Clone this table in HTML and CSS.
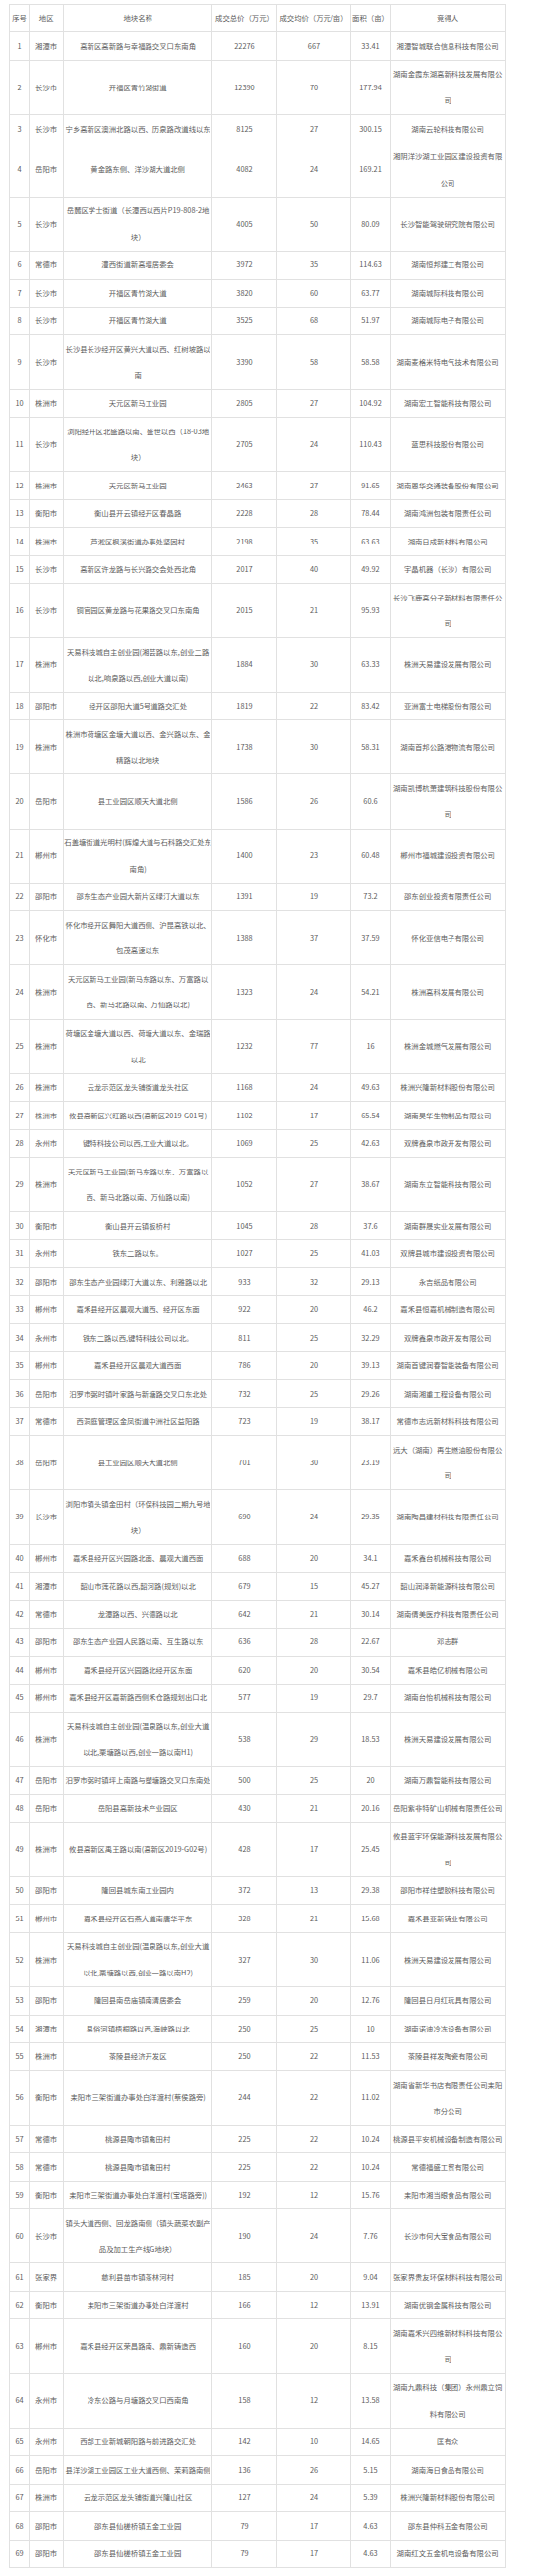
FILE: index.html
```html
<!DOCTYPE html>
<html lang="zh-CN">
<head>
<meta charset="utf-8">
<title>土地成交</title>
<link rel="stylesheet" href="styles.css">
</head>
<body>
<table class="land">
<colgroup>
<col class="c-no"><col class="c-area"><col class="c-name"><col class="c-total"><col class="c-avg"><col class="c-size"><col class="c-buyer">
</colgroup>
<thead>
<tr><th>序号</th><th>地区</th><th>地块名称</th><th>成交总价（万元）</th><th>成交均价（万元/亩）</th><th>面积（亩）</th><th>竞得人</th></tr>
</thead>
<tbody>
<tr><td>1</td><td>湘潭市</td><td>高新区高新路与幸福路交叉口东南角</td><td>22276</td><td>667</td><td>33.41</td><td>湘潭智城联合信息科技有限公司</td></tr>
<tr><td>2</td><td>长沙市</td><td>开福区青竹湖街道</td><td>12390</td><td>70</td><td>177.94</td><td>湖南金霞东湖高新科技发展有限公司</td></tr>
<tr><td>3</td><td>长沙市</td><td>宁乡高新区澳洲北路以西、历泉路改道线以东</td><td>8125</td><td>27</td><td>300.15</td><td>湖南云轮科技有限公司</td></tr>
<tr><td>4</td><td>岳阳市</td><td>黄金路东侧、洋沙湖大道北侧</td><td>4082</td><td>24</td><td>169.21</td><td>湘阴洋沙湖工业园区建设投资有限公司</td></tr>
<tr><td>5</td><td>长沙市</td><td>岳麓区学士街道（长潭西以西片P19-808-2地块）</td><td>4005</td><td>50</td><td>80.09</td><td>长沙智能驾驶研究院有限公司</td></tr>
<tr><td>6</td><td>常德市</td><td>澧西街道新高堰居委会</td><td>3972</td><td>35</td><td>114.63</td><td>湖南恒邦建工有限公司</td></tr>
<tr><td>7</td><td>长沙市</td><td>开福区青竹湖大道</td><td>3820</td><td>60</td><td>63.77</td><td>湖南城际科技有限公司</td></tr>
<tr><td>8</td><td>长沙市</td><td>开福区青竹湖大道</td><td>3525</td><td>68</td><td>51.97</td><td>湖南城际电子有限公司</td></tr>
<tr><td>9</td><td>长沙市</td><td>长沙县长沙经开区黄兴大道以西、红树坡路以南</td><td>3390</td><td>58</td><td>58.58</td><td>湖南麦格米特电气技术有限公司</td></tr>
<tr><td>10</td><td>株洲市</td><td>天元区新马工业园</td><td>2805</td><td>27</td><td>104.92</td><td>湖南宏工智能科技有限公司</td></tr>
<tr><td>11</td><td>长沙市</td><td>浏阳经开区北盛路以南、盛世以西（18-03地块）</td><td>2705</td><td>24</td><td>110.43</td><td>蓝思科技股份有限公司</td></tr>
<tr><td>12</td><td>株洲市</td><td>天元区新马工业园</td><td>2463</td><td>27</td><td>91.65</td><td>湖南恩华交通装备股份有限公司</td></tr>
<tr><td>13</td><td>衡阳市</td><td>衡山县开云镇经开区春晶路</td><td>2228</td><td>28</td><td>78.44</td><td>湖南鸿洲包装有限责任公司</td></tr>
<tr><td>14</td><td>株洲市</td><td>芦淞区枫溪街道办事处坚固村</td><td>2198</td><td>35</td><td>63.63</td><td>湖南日成新材料有限公司</td></tr>
<tr><td>15</td><td>长沙市</td><td>高新区许龙路与长兴路交会处西北角</td><td>2017</td><td>40</td><td>49.92</td><td>宇晶机器（长沙）有限公司</td></tr>
<tr><td>16</td><td>长沙市</td><td>铜官园区黄龙路与花果路交叉口东南角</td><td>2015</td><td>21</td><td>95.93</td><td>长沙飞鹿高分子新材料有限责任公司</td></tr>
<tr><td>17</td><td>株洲市</td><td>天易科技城自主创业园(湘芸路以东,创业二路以北,响泉路以西,创业大道以南)</td><td>1884</td><td>30</td><td>63.33</td><td>株洲天易建设发展有限公司</td></tr>
<tr><td>18</td><td>邵阳市</td><td>经开区邵阳大道5号道路交汇处</td><td>1819</td><td>22</td><td>83.42</td><td>亚洲富士电梯股份有限公司</td></tr>
<tr><td>19</td><td>株洲市</td><td>株洲市荷塘区金塘大道以西、金兴路以东、金精路以北地块</td><td>1738</td><td>30</td><td>58.31</td><td>湖南首邦公路港物流有限公司</td></tr>
<tr><td>20</td><td>岳阳市</td><td>县工业园区顺天大道北侧</td><td>1586</td><td>26</td><td>60.6</td><td>湖南凯博杭萧建筑科技股份有限公司</td></tr>
<tr><td>21</td><td>郴州市</td><td>石盖塘街道光明村(辉煌大道与石科路交汇处东南角)</td><td>1400</td><td>23</td><td>60.48</td><td>郴州市福城建设投资有限公司</td></tr>
<tr><td>22</td><td>邵阳市</td><td>邵东生态产业园大新片区绿汀大道以东</td><td>1391</td><td>19</td><td>73.2</td><td>邵东创业投资有限责任公司</td></tr>
<tr><td>23</td><td>怀化市</td><td>怀化市经开区舞阳大道西侧、沪昆高铁以北、包茂高速以东</td><td>1388</td><td>37</td><td>37.59</td><td>怀化亚信电子有限公司</td></tr>
<tr><td>24</td><td>株洲市</td><td>天元区新马工业园(新马东路以东、万富路以西、新马北路以南、万仙路以北)</td><td>1323</td><td>24</td><td>54.21</td><td>株洲高科发展有限公司</td></tr>
<tr><td>25</td><td>株洲市</td><td>荷塘区金塘大道以西、荷塘大道以东、金瑞路以北</td><td>1232</td><td>77</td><td>16</td><td>株洲金城燃气发展有限公司</td></tr>
<tr><td>26</td><td>株洲市</td><td>云龙示范区龙头铺街道龙头社区</td><td>1168</td><td>24</td><td>49.63</td><td>株洲兴隆新材料股份有限公司</td></tr>
<tr><td>27</td><td>株洲市</td><td>攸县高新区兴旺路以西(高新区2019-G01号)</td><td>1102</td><td>17</td><td>65.54</td><td>湖南昊华生物制品有限公司</td></tr>
<tr><td>28</td><td>永州市</td><td>键特科技公司以西,工业大道以北。</td><td>1069</td><td>25</td><td>42.63</td><td>双牌鑫泉市政开发有限公司</td></tr>
<tr><td>29</td><td>株洲市</td><td>天元区新马工业园(新马东路以东、万富路以西、新马北路以南、万仙路以南)</td><td>1052</td><td>27</td><td>38.67</td><td>湖南东立智能科技有限公司</td></tr>
<tr><td>30</td><td>衡阳市</td><td>衡山县开云镇板桥村</td><td>1045</td><td>28</td><td>37.6</td><td>湖南群晟实业发展有限公司</td></tr>
<tr><td>31</td><td>永州市</td><td>铁东二路以东。</td><td>1027</td><td>25</td><td>41.03</td><td>双牌县城市建设投资有限公司</td></tr>
<tr><td>32</td><td>邵阳市</td><td>邵东生态产业园绿汀大道以东、利雅路以北</td><td>933</td><td>32</td><td>29.13</td><td>永吉纸品有限公司</td></tr>
<tr><td>33</td><td>郴州市</td><td>嘉禾县经开区晨观大道西、经开区东面</td><td>922</td><td>20</td><td>46.2</td><td>嘉禾县恒嘉机械制造有限公司</td></tr>
<tr><td>34</td><td>永州市</td><td>铁东二路以西,键特科技公司以北。</td><td>811</td><td>25</td><td>32.29</td><td>双牌鑫泉市政开发有限公司</td></tr>
<tr><td>35</td><td>郴州市</td><td>嘉禾县经开区晨观大道西面</td><td>786</td><td>20</td><td>39.13</td><td>湖南首键润春智能装备有限公司</td></tr>
<tr><td>36</td><td>岳阳市</td><td>汨罗市弼时镇叶家路与新塘路交叉口东北处</td><td>732</td><td>25</td><td>29.26</td><td>湖南湘重工程设备有限公司</td></tr>
<tr><td>37</td><td>常德市</td><td>西洞庭管理区金凤街道中洲社区益阳路</td><td>723</td><td>19</td><td>38.17</td><td>常德市志远新材料科技有限公司</td></tr>
<tr><td>38</td><td>岳阳市</td><td>县工业园区顺天大道北侧</td><td>701</td><td>30</td><td>23.19</td><td>远大（湖南）再生燃油股份有限公司</td></tr>
<tr><td>39</td><td>长沙市</td><td>浏阳市镇头镇金田村（环保科技园二期九号地块）</td><td>690</td><td>24</td><td>29.35</td><td>湖南陶昌建材科技有限责任公司</td></tr>
<tr><td>40</td><td>郴州市</td><td>嘉禾县经开区兴园路北面、晨观大道西面</td><td>688</td><td>20</td><td>34.1</td><td>嘉禾鑫台机械科技有限公司</td></tr>
<tr><td>41</td><td>湘潭市</td><td>韶山市莲花路以西,韶河路(规划)以北</td><td>679</td><td>15</td><td>45.27</td><td>韶山润泽新能源科技有限公司</td></tr>
<tr><td>42</td><td>常德市</td><td>龙潭路以西、兴德路以北</td><td>642</td><td>21</td><td>30.14</td><td>湖南倩美医疗科技有限责任公司</td></tr>
<tr><td>43</td><td>邵阳市</td><td>邵东生态产业园人民路以南、互生路以东</td><td>636</td><td>28</td><td>22.67</td><td>邓志群</td></tr>
<tr><td>44</td><td>郴州市</td><td>嘉禾县经开区兴园路北经开区东面</td><td>620</td><td>20</td><td>30.54</td><td>嘉禾县皓亿机械有限公司</td></tr>
<tr><td>45</td><td>郴州市</td><td>嘉禾县经开区嘉新路西侧禾仓路规划出口北</td><td>577</td><td>19</td><td>29.7</td><td>湖南台怡机械科技有限公司</td></tr>
<tr><td>46</td><td>株洲市</td><td>天易科技城自主创业园(温泉路以东,创业大道以北,栗塘路以西,创业一路以南H1)</td><td>538</td><td>29</td><td>18.53</td><td>株洲天易建设发展有限公司</td></tr>
<tr><td>47</td><td>岳阳市</td><td>汨罗市弼时镇坪上南路与塑塘路交叉口东南处</td><td>500</td><td>25</td><td>20</td><td>湖南万鼎智能科技有限公司</td></tr>
<tr><td>48</td><td>岳阳市</td><td>岳阳县高新技术产业园区</td><td>430</td><td>21</td><td>20.16</td><td>岳阳紫非特矿山机械有限责任公司</td></tr>
<tr><td>49</td><td>株洲市</td><td>攸县高新区禹王路以南(高新区2019-G02号)</td><td>428</td><td>17</td><td>25.45</td><td>攸县蓝宇环保能源科技发展有限公司</td></tr>
<tr><td>50</td><td>邵阳市</td><td>隆回县城东南工业园内</td><td>372</td><td>13</td><td>29.38</td><td>邵阳市祥佳塑胶科技有限公司</td></tr>
<tr><td>51</td><td>郴州市</td><td>嘉禾县经开区石燕大道南唐华平东</td><td>328</td><td>21</td><td>15.68</td><td>嘉禾县亚新铸业有限公司</td></tr>
<tr><td>52</td><td>株洲市</td><td>天易科技城自主创业园(温泉路以东,创业大道以北,栗塘路以西,创业一路以南H2)</td><td>327</td><td>30</td><td>11.06</td><td>株洲天易建设发展有限公司</td></tr>
<tr><td>53</td><td>邵阳市</td><td>隆回县南岳庙镇南清居委会</td><td>259</td><td>20</td><td>12.76</td><td>隆回县日月红玩具有限公司</td></tr>
<tr><td>54</td><td>湘潭市</td><td>易俗河镇梧桐路以西,海峡路以北</td><td>250</td><td>25</td><td>10</td><td>湖南诺迪冷冻设备有限公司</td></tr>
<tr><td>55</td><td>株洲市</td><td>茶陵县经济开发区</td><td>250</td><td>22</td><td>11.53</td><td>茶陵县祥发陶瓷有限公司</td></tr>
<tr><td>56</td><td>衡阳市</td><td>耒阳市三架街道办事处白洋渡村(蔡侯路旁)</td><td>244</td><td>22</td><td>11.02</td><td>湖南省新华书店有限责任公司耒阳市分公司</td></tr>
<tr><td>57</td><td>常德市</td><td>桃源县陬市镇禽田村</td><td>225</td><td>22</td><td>10.24</td><td>桃源县平安机械设备制造有限公司</td></tr>
<tr><td>58</td><td>常德市</td><td>桃源县陬市镇禽田村</td><td>225</td><td>22</td><td>10.24</td><td>常德福盛工贸有限公司</td></tr>
<tr><td>59</td><td>衡阳市</td><td>耒阳市三架街道办事处白洋渡村(宝塔路旁))</td><td>192</td><td>12</td><td>15.76</td><td>耒阳市湘当眼食品有限公司</td></tr>
<tr><td>60</td><td>长沙市</td><td>镇头大道西侧、回龙路南侧（镇头蔬菜农副产品及加工生产线G地块）</td><td>190</td><td>24</td><td>7.76</td><td>长沙市何大宝食品有限公司</td></tr>
<tr><td>61</td><td>张家界</td><td>慈利县苗市镇茶林河村</td><td>185</td><td>20</td><td>9.04</td><td>张家界贵友环保材料科技有限公司</td></tr>
<tr><td>62</td><td>衡阳市</td><td>耒阳市三架街道办事处白洋渡村</td><td>166</td><td>12</td><td>13.91</td><td>湖南优钢金属科技有限公司</td></tr>
<tr><td>63</td><td>郴州市</td><td>嘉禾县经开区荣昌路南、鼎新铸造西</td><td>160</td><td>20</td><td>8.15</td><td>湖南嘉禾兴四维新材料科技有限公司</td></tr>
<tr><td>64</td><td>永州市</td><td>冷东公路与月塘路交叉口西南角</td><td>158</td><td>12</td><td>13.58</td><td>湖南九鼎科技（集团）永州鼎立饲料有限公司</td></tr>
<tr><td>65</td><td>永州市</td><td>西部工业新城朝阳路与前进路交汇处</td><td>142</td><td>10</td><td>14.65</td><td>匡有众</td></tr>
<tr><td>66</td><td>岳阳市</td><td>县洋沙湖工业园区工业大道西侧、茉莉路南侧</td><td>136</td><td>26</td><td>5.15</td><td>湖南海日食品有限公司</td></tr>
<tr><td>67</td><td>株洲市</td><td>云龙示范区龙头铺街道兴隆山社区</td><td>127</td><td>24</td><td>5.39</td><td>株洲兴隆新材料股份有限公司</td></tr>
<tr><td>68</td><td>邵阳市</td><td>邵东县仙槎桥镇五金工业园</td><td>79</td><td>17</td><td>4.63</td><td>邵东县仲科五金有限公司</td></tr>
<tr><td>69</td><td>邵阳市</td><td>邵东县仙槎桥镇五金工业园</td><td>79</td><td>17</td><td>4.63</td><td>湖南红文五金机电设备有限公司</td></tr>
</tbody>
</table>
</body>
</html>
```
FILE: styles.css
```css
html, body {
  margin: 0;
  padding: 0;
  background: #ffffff;
}

body {
  font-family: "Noto Sans CJK SC", "Noto Sans", sans-serif;
  color: #5c5c5c;
}

.land {
  margin: 4px 0 0 9px;
  width: 504.3px;
  table-layout: fixed;
  border-collapse: collapse;
  font-size: 7.37px;
  line-height: 26.7px;
}

.c-no { width: 20px; }
.c-area { width: 35.3px; }
.c-name { width: 150.7px; }
.c-total { width: 66px; }
.c-avg { width: 75px; }
.c-size { width: 40px; }
.c-buyer { width: 117.3px; }

.land th,
.land td {
  border: 1px solid #e1e1e1;
  padding: 0.4px 0;
  text-align: center;
  vertical-align: middle;
  font-weight: normal;
  word-break: break-all;
}
```
